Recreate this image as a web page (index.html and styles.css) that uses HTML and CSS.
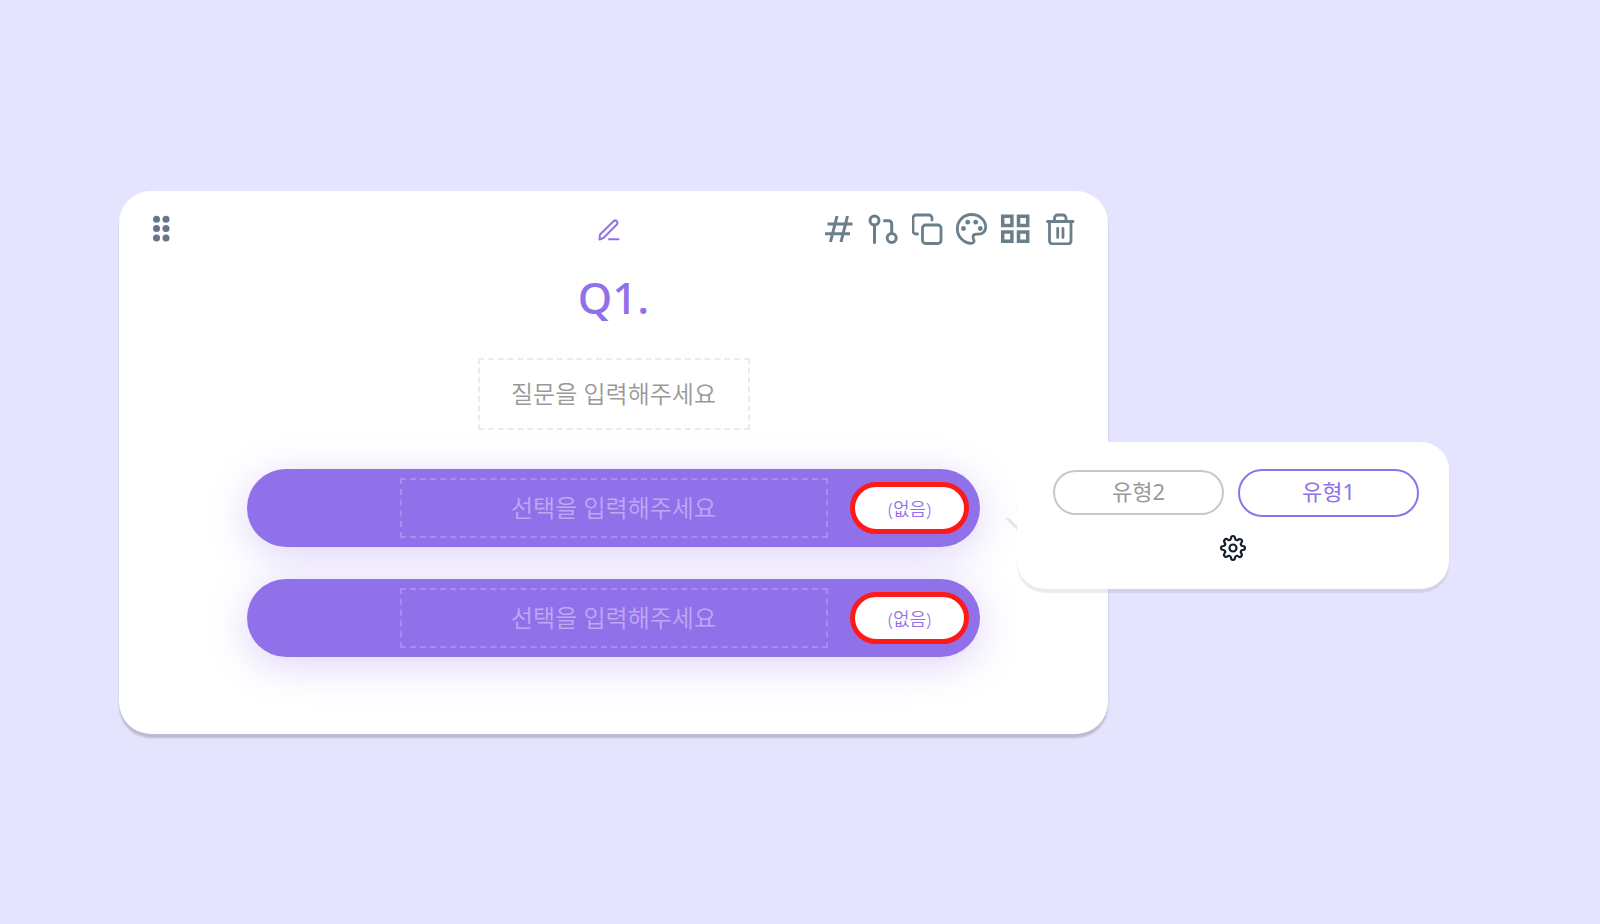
FILE: index.html
```
<!DOCTYPE html>
<html lang="ko">
<head>
    <meta charset="utf-8">
    <title>Q1.</title>
    <link rel="stylesheet" href="styles.css">
</head>
<body>
    <main class="page">
        <section class="card">
            <!-- Card header: drag handle, edit, tools -->
            <header class="card-header">
                <button class="icon-btn handle" type="button" aria-label="이동">
                    <svg width="20" height="28" viewBox="0 0 20 28" fill="#66758a">
                        <circle cx="5.5" cy="4.2" r="3.5"/><circle cx="15" cy="4.2" r="3.5"/>
                        <circle cx="5.5" cy="13.6" r="3.5"/><circle cx="15" cy="13.6" r="3.5"/>
                        <circle cx="5.5" cy="23" r="3.5"/><circle cx="15" cy="23" r="3.5"/>
                    </svg>
                </button>
                <button class="icon-btn edit" type="button" aria-label="편집">
                    <svg width="24" height="24" viewBox="0 0 24 24" fill="none" stroke="#9171ea" stroke-width="2" stroke-linecap="round" stroke-linejoin="round">
                        <path d="M2.500 22.500l.5-5L16.500 4.200a2.200 2.200 0 0 1 3.300 3.300L6.500 21z"/>
                        <path d="M12 22.300h9.500"/>
                    </svg>
                </button>
                <div class="tools">
                    <button class="icon-btn" type="button" aria-label="번호">
                        <svg width="32" height="32" viewBox="0 0 32 32" fill="none" stroke="#6b7f8b" stroke-width="3">
                            <path d="M13 3L6.500 29M23.500 3L17 29M3.500 11h25M1 20.700h25"/>
                        </svg>
                    </button>
                    <button class="icon-btn" type="button" aria-label="분기">
                        <svg width="32" height="32" viewBox="0 0 32 32" fill="none" stroke="#6b7f8b" stroke-width="3" stroke-linecap="round" stroke-linejoin="round">
                            <circle cx="6.500" cy="7.500" r="4.500"/><circle cx="23.700" cy="25" r="4.500"/>
                            <path d="M6.500 12V29.500M16.500 7.700h4.200a3 3 0 0 1 3 3v9.500"/>
                        </svg>
                    </button>
                    <button class="icon-btn" type="button" aria-label="복사">
                        <svg width="32" height="32" viewBox="0 0 32 32" fill="none" stroke="#6b7f8b" stroke-width="2.800" stroke-linecap="round" stroke-linejoin="round">
                            <rect x="10.500" y="12" width="18.500" height="18.500" rx="3"/>
                            <path d="M5.500 21H4a3 3 0 0 1-3-3V5a3 3 0 0 1 3-3h13a3 3 0 0 1 3 3v2"/>
                        </svg>
                    </button>
                    <button class="icon-btn" type="button" aria-label="색상">
                        <svg width="32" height="32" viewBox="0 0 32 32" fill="none" stroke="#6b7f8b" stroke-width="2.800" stroke-linejoin="round">
                            <path d="M15.500 1.500C7.500 1.500 1.300 7.800 1.300 15.800S8 30.300 15 30.300c2.200 0 3.200-1 3-2.800-.2-1.300-1-2-1-3.300 0-2 1.500-3 3.500-3H22.500c4.200 0 7.200-3 7.200-7C29.700 7.200 23.500 1.500 15.500 1.500z"/>
                            <g fill="#6b7f8b" stroke="none"><circle cx="7.500" cy="15.500" r="2.400"/><circle cx="11.700" cy="9.200" r="2.400"/><circle cx="19.700" cy="9.200" r="2.400"/><circle cx="24.300" cy="15.500" r="2.400"/></g>
                        </svg>
                    </button>
                    <button class="icon-btn" type="button" aria-label="배치">
                        <svg width="32" height="32" viewBox="0 0 32 32" fill="none" stroke="#6b7f8b" stroke-width="3.500">
                            <path d="M2.700 3.300h9.200v9.200H2.700zM18.500 3.300h9.200v9.200h-9.200zM2.700 19h9.200v9.200H2.700zM18.500 19h9.200v9.200h-9.200z"/>
                        </svg>
                    </button>
                    <button class="icon-btn" type="button" aria-label="삭제">
                        <svg width="32" height="32" viewBox="0 0 32 32" fill="none" stroke="#6b7f8b" stroke-width="2.800" stroke-linecap="round" stroke-linejoin="round">
                            <path d="M3.500 8.500h25.500M5.500 8.500V28a2.800 2.800 0 0 0 2.800 2.800h15.900a2.800 2.800 0 0 0 2.800-2.800V8.500M10.500 8V5a3 3 0 0 1 3-3h5.500a3 3 0 0 1 3 3v3M13.700 15.500v9M19 15.500v9"/>
                        </svg>
                    </button>
                </div>
            </header>

            <h1 class="question-number">Q1.</h1>
            <input class="question-input" type="text" placeholder="질문을 입력해주세요" aria-label="질문">

            <!-- Answer options -->
            <div class="options">
                <div class="option">
                    <input class="option-input" type="text" placeholder="선택을 입력해주세요" aria-label="선택 1">
                    <button class="badge" type="button">(없음)</button>
                </div>
                <div class="option">
                    <input class="option-input" type="text" placeholder="선택을 입력해주세요" aria-label="선택 2">
                    <button class="badge" type="button">(없음)</button>
                </div>
            </div>

            <!-- Type picker that opens over the card edge -->
            <aside class="popover">
                <div class="types">
                    <button class="type" type="button">유형2</button>
                    <button class="type type-active" type="button">유형1</button>
                </div>
                <button class="icon-btn" type="button" aria-label="설정">
                    <svg width="28" height="28" viewBox="0 0 28 28" fill="none" stroke="#14202e" stroke-width="2.200" stroke-linejoin="round">
                        <circle cx="14" cy="14" r="3.500"/>
                        <path d="M12 4.500Q12 2 14 2T16 4.500Q16.500 6.500 18.500 6.200Q20.500 4.300 22.300 5.700T21.800 9.500Q21.500 11.500 23.500 12Q26 12 26 14T23.500 16Q21.500 16.500 21.800 18.500Q23.700 20.500 22.300 22.300T18.500 21.800Q16.500 21.500 16 23.500Q16 26 14 26T12 23.500Q11.500 21.500 9.500 21.800Q7.500 23.700 5.700 22.300T6.200 18.500Q6.500 16.500 4.500 16Q2 16 2 14T4.500 12Q6.500 11.500 6.200 9.500Q4.300 7.500 5.700 5.700T9.500 6.200Q11.500 6.500 12 4.500z"/>
                    </svg>
                </button>
            </aside>
        </section>
    </main>
</body>
</html>
```
FILE: styles.css
```
* {
    box-sizing: border-box;
}
body {
    margin: 0;
    background: #e5e4ff;
    font-family: "Noto Sans", "Noto Sans CJK KR", sans-serif;
    color: #9171ea;
}
.page {
    display: flex;
    align-items: center;
    min-height: 100vh;
    padding: 0 492px 0 119px;
}
.card {
    position: relative;
    z-index: 0;
    flex: 1;
    display: flex;
    flex-direction: column;
    align-items: center;
    padding: 18px 32px 77px;
    background: #fff;
    border-radius: 32px;
    box-shadow: 0 4px 2px rgba(0, 0, 0, 0.18);
}
button,
input {
    font: inherit;
}
.icon-btn {
    display: flex;
    padding: 0;
    border: none;
    background: none;
    cursor: pointer;
}
.card-header {
    display: grid;
    grid-template-columns: 1fr auto 1fr;
    align-items: center;
    align-self: stretch;
    height: 40px;
}
.handle {
    justify-self: start;
}
.edit {
    margin-right: 10px;
}
.tools {
    display: flex;
    justify-content: flex-end;
    gap: 12px;
}
.question-number {
    margin: 16px 0 29px;
    font-size: 44px;
    line-height: 64px;
    font-weight: 500;
}
.question-input {
    width: 272px;
    height: 72px;
    padding: 0 8px;
    border: 2px dashed #ebebeb;
    background: none;
    font-size: 24px;
    font-weight: 350;
    text-align: center;
}
.question-input::placeholder {
    color: #999;
}
.options {
    display: flex;
    flex-direction: column;
    gap: 32px;
    width: 100%;
    max-width: 733px;
    margin-top: 39px;
}
.option {
    display: grid;
    grid-template-columns: 1fr 428px 1fr;
    align-items: center;
    height: 78px;
    padding: 0 11px;
    background: #9171ea;
    border-radius: 39px;
    box-shadow: 0 8px 40px rgba(145, 113, 234, 0.3);
}
.option-input {
    grid-column: 2;
    height: 60px;
    padding: 0 8px;
    border: 2px dashed #a78def;
    background: none;
    font-size: 24px;
    font-weight: 350;
    text-align: center;
}
.option-input::placeholder {
    color: #bfa8f4;
}
.badge {
    justify-self: end;
    width: 119px;
    height: 52px;
    padding: 0;
    border: 5px solid #ff1a1a;
    border-radius: 26px;
    background: #fff;
    color: #9171ea;
    font-size: 18px;
    font-weight: 350;
}
.popover {
    position: absolute;
    top: 251px;
    right: -341px;
    display: flex;
    flex-direction: column;
    align-items: center;
    gap: 17px;
    width: 432px;
    padding: 27px 30px 27px;
    background: #fff;
    border-radius: 28px;
    box-shadow: 0 4px 1px rgba(0, 0, 0, 0.08);
}
/* tail pointing at the first option */
.popover::before {
    content: "";
    position: absolute;
    z-index: -1;
    top: 63px;
    left: -4px;
    width: 24px;
    height: 24px;
    background: #fff;
    box-shadow: 0 3px 1px rgba(0, 0, 0, 0.1);
    transform: rotate(45deg);
}
.types {
    display: flex;
    align-items: center;
    align-self: flex-end;
    gap: 14px;
}
.type {
    width: 171px;
    height: 45px;
    padding: 0 0 3px;
    border: 2px solid #c8c8c8;
    border-radius: 24px;
    background: #fff;
    color: #999;
    font-size: 22px;
    font-weight: 400;
    line-height: 32px;
}
.type-active {
    width: 181px;
    height: 48px;
    border-color: #9171ea;
    color: #9171ea;
}
```
